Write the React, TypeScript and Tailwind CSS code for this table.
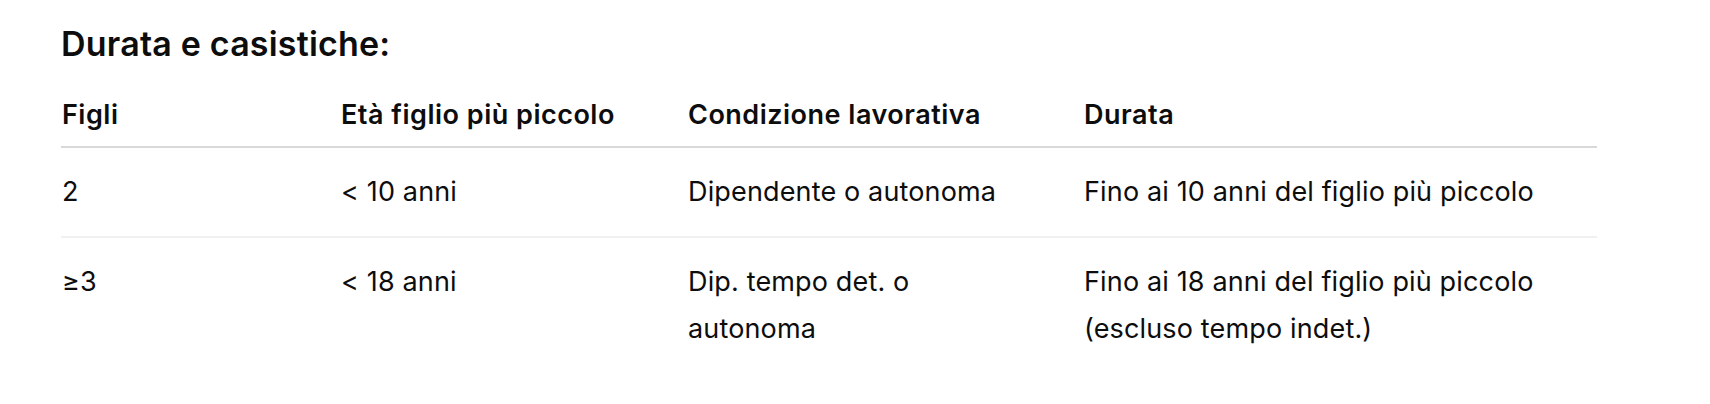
import React from "react";

const rows = [
  {
    figli: "2",
    eta: "< 10 anni",
    condizione: ["Dipendente o autonoma"],
    durata: ["Fino ai 10 anni del figlio più piccolo"],
  },
  {
    figli: "≥3",
    eta: "< 18 anni",
    condizione: ["Dip. tempo det. o", "autonoma"],
    durata: ["Fino ai 18 anni del figlio più piccolo", "(escluso tempo indet.)"],
  },
];

const cols = "grid grid-cols-[280px_347px_396px_1fr]";

export default function App() {
  return (
    <div className="w-[1710px] h-[404px] bg-white text-[#0d0d0d] font-['Inter',sans-serif] pl-[61px] pr-[113px]">
      <h3 className="pt-[20px] text-[34px] leading-[48px] font-semibold tracking-[0.2px]">
        Durata e casistiche:
      </h3>

      <div className="mt-[23px] text-[27px] leading-[47px] tracking-[0.15px]">
        {/* intestazione */}
        <div className={`${cols} border-b-2 border-[#d9d9d9] pb-[8px] font-semibold tracking-[0.5px]`}>
          <div className="pl-[1px]">Figli</div>
          <div>Età figlio più piccolo</div>
          <div>Condizione lavorativa</div>
          <div>Durata</div>
        </div>

        {rows.map((r, i) => (
          <div
            key={i}
            className={`${cols} pt-[20px] pb-[21px] ${i < rows.length - 1 ? "border-b-2 border-[#f0f0f0]" : ""}`}
          >
            <div className="pl-[1px]">{r.figli}</div>
            <div>{r.eta}</div>
            <div>
              {r.condizione.map((l) => (
                <div key={l}>{l}</div>
              ))}
            </div>
            <div>
              {r.durata.map((l) => (
                <div key={l}>{l}</div>
              ))}
            </div>
          </div>
        ))}
      </div>
    </div>
  );
}
